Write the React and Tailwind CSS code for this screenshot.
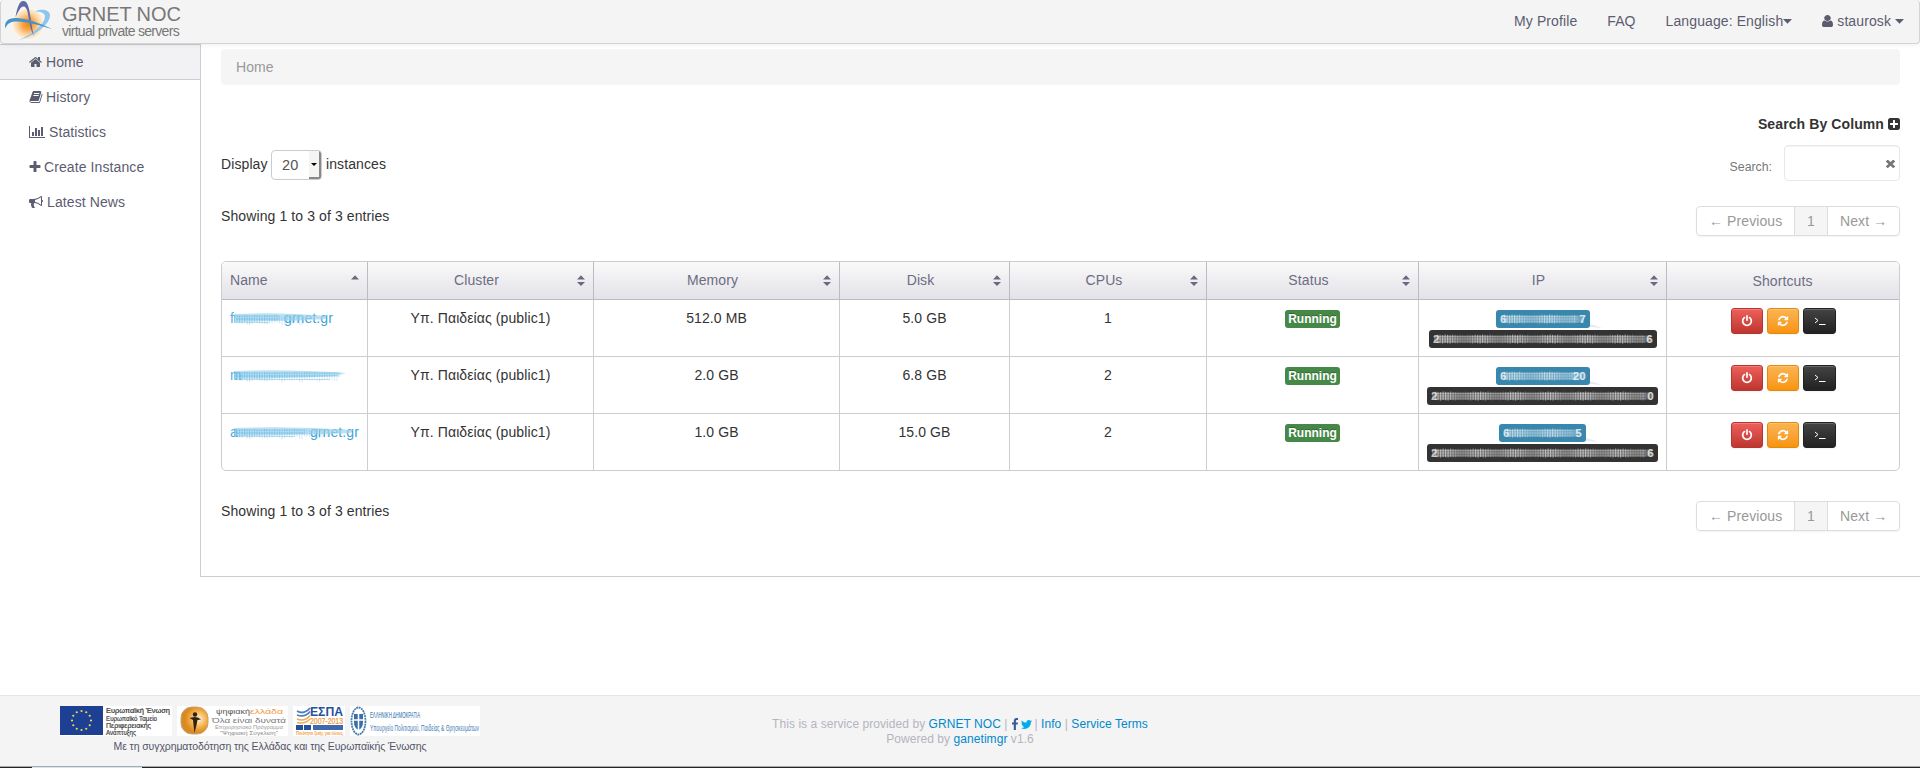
const P = {
  home: "M1408 992v480q0 26-19 45t-45 19h-384v-384h-256v384h-384q-26 0-45-19t-19-45v-480q0-1 .5-3t.5-3l575-474 575 474q1 2 1 6zm223-69l-62 74q-8 9-21 11h-3q-13 0-21-7l-692-577-692 577q-12 8-24 7-13-2-21-11l-62-74q-8-10-7-23.5t11-21.5l719-599q32-26 76-26t76 26l244 204v-195q0-14 9-23t23-9h192q14 0 23 9t9 23v408l219 182q10 8 11 21.5t-7 23.5z",
  book: "M1703 478q40 57 18 129l-275 906q-19 64-76.5 107.5t-122.5 43.5h-923q-77 0-148.5-53.5t-99.5-131.5q-24-67-2-127 0-4 3-27t4-37q1-8-3-21.5t-3-19.5q2-11 8-21t16.5-23.5 16.5-23.5q23-38 45-91.5t30-91.5q3-10 .5-30t-.5-28q3-11 17-28t17-23q21-36 42-92t25-90q1-9-2.5-32t.5-28q4-13 22-30.5t22-22.5q19-26 42.5-84.5t27.5-96.5q1-8-3-25.5t-2-26.5q2-8 9-18t18-23 17-21q8-12 16.5-30.5t15-35 16-36 19.5-32 26.5-23.5 36-11.5 47.5 5.5l-1 3q38-9 51-9h761q74 0 114 56t18 130l-274 906q-36 119-71.5 153.5t-128.5 34.5h-869q-27 0-38 15-11 16-1 43 24 70 144 70h923q29 0 56-15.5t35-41.5l300-987q7-22 5-57 38 15 59 43zm-1064 2q-4 13 2 22.5t20 9.5h608q13 0 25.5-9.5t16.5-22.5l21-64q4-13-2-22.5t-20-9.5h-608q-13 0-25.5 9.5t-16.5 22.5zm-83 256q-4 13 2 22.5t20 9.5h608q13 0 25.5-9.5t16.5-22.5l21-64q4-13-2-22.5t-20-9.5h-608q-13 0-25.5 9.5t-16.5 22.5z",
  chart: "M640 896v512h-256v-512h256zm384-512v1024h-256v-1024h256zm1024 1152v128h-2048v-1536h128v1408h1920zm-640-896v768h-256v-768h256zm384-384v1152h-256v-1152h256z",
  bullhorn: "M1664 640q53 0 90.5 37.5t37.5 90.5-37.5 90.5-90.5 37.5v384q0 52-38 90t-90 38q-417-347-812-380-58 19-91 66t-31 100.5 40 92.5q-20 33-23 65.5t6 58 33.5 55 48 50 61.5 50.5q-29 58-111.5 83t-168.5 11.5-132-55.5q-7-23-29.5-87.5t-32-94.5-23-89-15-101 3.500-98.5 22-110.5h-122q-66 0-113-47t-47-113v-192q0-66 47-113t113-47h480q435 0 896-384 52 0 90 38t38 90v384zm-128 604v-954q-394 302-768 343v270q377 42 768 341z",
  plus: "M1600 736v192q0 40-28 68t-68 28h-416v416q0 40-28 68t-68 28h-192q-40 0-68-28t-28-68v-416h-416q-40 0-68-28t-28-68v-192q0-40 28-68t68-28h416v-416q0-40 28-68t68-28h192q40 0 68 28t28 68v416h416q40 0 68 28t28 68z",
  plusSquare: "M1408 960v-128q0-26-19-45t-45-19h-320v-320q0-26-19-45t-45-19h-128q-26 0-45 19t-19 45v320h-320q-26 0-45 19t-19 45v128q0 26 19 45t45 19h320v320q0 26 19 45t45 19h128q26 0 45-19t19-45v-320h320q26 0 45-19t19-45zm256-544v960q0 119-84.5 203.5t-203.5 84.5h-960q-119 0-203.5-84.5t-84.5-203.5v-960q0-119 84.5-203.5t203.5-84.5h960q119 0 203.5 84.5t84.5 203.5z",
  user: "M1536 1399q0 109-62.5 187t-150.5 78h-854q-88 0-150.5-78t-62.5-187q0-85 8.5-160.5t31.5-152 58.5-131 94-89 134.5-34.5q131 128 313 128t313-128q76 0 134.5 34.5t94 89 58.5 131 31.5 152 8.5 160.5zm-256-887q0 159-112.5 271.5t-271.5 112.5-271.5-112.5-112.5-271.5 112.5-271.5 271.5-112.5 271.5 112.5 112.5 271.5z",
  power: "M1664 896q0 156-61 298t-164 245-245 164-298 61-298-61-245-164-164-245-61-298q0-182 80.5-343t226.5-270q43-32 95.5-25t83.5 50q32 42 24.5 94.5t-49.5 84.5q-98 74-151.5 181t-53.5 228q0 104 40.5 198.5t109.5 163.5 163.5 109.5 198.5 40.5 198.5-40.5 163.5-109.5 109.5-163.5 40.5-198.5q0-121-53.5-228t-151.5-181q-42-32-49.5-84.5t24.5-94.5q31-43 84-50t95 25q146 109 226.5 270t80.5 343zm-640-768v640q0 52-38 90t-90 38-90-38-38-90v-640q0-52 38-90t90-38 90 38 38 90z",
  refresh: "M1639 1056q0 5-1 7-64 268-268 434.5t-478 166.5q-146 0-282.5-55t-243.5-157l-129 129q-19 19-45 19t-45-19-19-45v-448q0-26 19-45t45-19h448q26 0 45 19t19 45-19 45l-137 137q71 66 161 102t187 36q134 0 250-65t186-179q11-17 53-117 8-23 30-23h192q13 0 22.5 9.5t9.5 22.5zm25-800v448q0 26-19 45t-45 19h-448q-26 0-45-19t-19-45 19-45l138-138q-148-137-349-137-134 0-250 65t-186 179q-11 17-53 117-8 23-30 23h-199q-13 0-22.5-9.5t-9.5-22.5v-7q65-268 270-434.5t480-166.5q146 0 284 55.5t245 156.5l130-129q19-19 45-19t45 19 19 45z",
  facebook: "M1343 12v264h-157q-86 0-116 36t-30 108v189h293l-39 296h-254v759h-306v-759h-255v-296h255v-218q0-186 104-288.5t277-102.5q147 0 228 12z",
  twitter: "M1684 408q-67 98-162 167 1 14 1 42 0 130-38 259.5t-115.5 248.5-184.5 210.5-258 146-323 54.5q-271 0-496-145 35 4 78 4 225 0 401-138-105-2-188-64.5t-114-159.5q33 5 61 5 43 0 85-11-112-23-185.5-111.5t-73.5-205.5v-4q68 38 146 41-66-44-105-115t-39-154q0-88 44-163 121 149 294.5 238.5t371.5 99.5q-8-38-8-74 0-134 94.5-228.5t228.5-94.5q140 0 236 102 109-21 205-78-37 115-142 178 93-10 186-50z",
  times: "M1490 1322q0 40-28 68l-136 136q-28 28-68 28t-68-28l-294-294-294 294q-28 28-68 28t-68-28l-136-136q-28-28-28-68t28-68l294-294-294-294q-28-28-28-68t28-68l136-136q28-28 68-28t68 28l294 294 294-294q28-28 68-28t68 28l136 136q28 28 28 68t-28 68l-294 294 294 294q28 28 28 68z",
};

function Icon({ name, box = "0 0 1792 1792", className }) {
  return (
    <svg viewBox={box} preserveAspectRatio="none" fill="currentColor" className={"shrink-0 " + className}>
      <path d={P[name]} />
    </svg>
  );
}

function Caret({ className }) {
  return (
    <svg viewBox="0 0 9 5" className={"h-[5px] w-[9px] shrink-0 " + className} fill="currentColor">
      <path d="M0 0h9L4.500 4.800z" />
    </svg>
  );
}

function Logo() {
  return (
    <svg viewBox="0 0 54 44" className="-ml-px h-11 w-[54px] shrink-0">
      <defs>
        <radialGradient id="sun">
          <stop offset="0" stopColor="#f58a07" />
          <stop offset="0.3" stopColor="#f8a040" />
          <stop offset="0.65" stopColor="#fcd3a0" />
          <stop offset="1" stopColor="#fdf8f2" />
        </radialGradient>
      </defs>
      <circle cx="28" cy="24" r="16.5" fill="url(#sun)" />
      <path d="M34.500 11.500C42 8 49 10 50 14.500 50.500 24 37 34.500 18.500 40.500 33 33.500 44.500 25 45 16.500 45 12.500 40 11.500 34.500 11.500z" fill="#8cc6ee" />
      <path d="M15.500 17C17.500 6 20 .5 23.500 1c4 0 5.500 6 7 16 1 8 2 14 3.500 19-3.500-6-4.500-12-5.500-19C27.500 9 25.500 6.500 23.500 6.500c-3 0-5 5-8 10.500z" fill="#5f68a8" />
      <path d="M5.300 28.500C4 22 8 18 15.500 18 27 18 39 23 52 29 40 25.500 27 21.500 17 21.500c-6 0-9.500 1.500-11.700 7z" fill="#4394cc" />
    </svg>
  );
}

const NAV = [
  { label: "Home", icon: "home", active: true },
  { label: "History", icon: "book" },
  { label: "Statistics", icon: "chart", box: "0 0 2048 1792" },
  { label: "Create Instance", icon: "plus" },
  { label: "Latest News", icon: "bullhorn" },
];

const NAV_ICON = {
  home: "h-[14px] w-[14px] -ml-[0.5px] -mr-[0.5px]",
  book: "h-[14px] w-[14px] -ml-[0.5px] -mr-[0.5px]",
  chart: "h-[14px] w-[16px]",
  plus: "h-[14px] w-[14px] -ml-[1px] -mr-[2px]",
  bullhorn: "h-[14px] w-[14px]",
};

const COLS = ["Name", "Cluster", "Memory", "Disk", "CPUs", "Status", "IP", "Shortcuts"];

const ROWS = [
  { id: 1, name: ["f", "grnet.gr"], nameW: 103, mem: "512.0 MB", disk: "5.0 GB", cpus: "1", ip4: ["6", "7"], ip4W: 94, ip6: ["2", "6"], ip6W: 228 },
  { id: 2, name: ["m", ""], nameW: 114, mem: "2.0 GB", disk: "6.8 GB", cpus: "2", ip4: ["6", "20"], ip4W: 94, ip6: ["2", "0"], ip6W: 231 },
  { id: 3, name: ["a", "grnet.gr"], nameW: 129, mem: "1.0 GB", disk: "15.0 GB", cpus: "2", ip4: ["6", "5"], ip4W: 87, ip6: ["2", "6"], ip6W: 231 },
];

function Sorter({ asc }) {
  return (
    <svg viewBox="0 0 8 11" className="absolute right-2 top-[13px] h-[11px] w-2" fill="#69697f">
      <path d="M0 4.500h8L4 .2z" />
      {!asc && <path d="M0 7h8L4 11z" />}
    </svg>
  );
}

function Pager() {
  return (
    <div className="flex h-[30px] overflow-hidden rounded-[4px] border border-[#ddd] leading-7 text-[#999] shadow-[0_1px_2px_rgba(0,0,0,0.05)]">
      <span className="w-[97px] whitespace-pre pl-3">← Previous</span>
      <span className="w-[34px] border-x border-[#ddd] bg-[#f5f5f5] text-center">1</span>
      <span className="w-[71px] whitespace-pre pl-3">Next →</span>
    </div>
  );
}

// Masked address label: only the outer characters stay readable.
function MaskedLabel({ ends, width, color, glow }) {
  const count = Math.floor((width - 20) / 2.5);
  return (
    <svg width={width} height="18" viewBox={"0 0 " + width + " 18"} className="shrink-0 overflow-visible">
      {glow && <path d={"M" + (width - 22) + " 15q18 -4 34 3z"} fill={color} opacity="0.15" />}
      <rect width={width} height="18" rx="3" fill={color} />
      <rect x="5" y="5.500" width={width - 11} height="7" fill="#fff" opacity="0.28" />
      {Array.from({ length: count }, (_, i) => (
        <rect key={i} x={8 + i * 2.5} y={4.5 + (i % 3) * 0.3} width="1.2" height="8.500" fill="#fff" opacity={0.3 + 0.2 * Math.sin(i * 0.45)} />
      ))}
      <path d={"M7 6.500H" + (width - 12) + "M7 9H" + (width - 12) + "M7 12H" + (width - 12)} stroke="#fff" strokeWidth="0.8" opacity="0.3" />
      <text x="4" y="13" fontSize="11.800" fontWeight="700" fill="#fff" opacity="0.65">{ends[0]}</text>
      <text x={width - 4} y="13" textAnchor="end" fontSize="11.800" fontWeight="700" fill="#fff" opacity="0.75">{ends[1]}</text>
    </svg>
  );
}

// Masked host name: a smudge with the first letter and, where legible, the domain.
function MaskedName({ ends, width }) {
  const tail = ends[1] ? 50 : 0;
  const span = width - tail - 8;
  const count = Math.floor((span + tail * 0.5) / 2.5);
  return (
    <svg width={width + 4} height="20" viewBox={"0 0 " + (width + 4) + " 20"} className="block overflow-visible" fill="#1a94d2">
      <text x="0" y="15" fontSize="14" opacity="0.75">{ends[0]}</text>
      {tail > 0 && <text x={width} y="15" textAnchor="end" fontSize="14" opacity="0.85">{ends[1]}</text>}
      <path d={"M4 6Q" + width * 0.5 + " 4 " + (width + (tail ? -6 : 2)) + " 8L" + (width - 8) + " 11Q" + width * 0.6 + " 13 4 14z"} fill="#9fd3ee" opacity="0.7" />
      {Array.from({ length: count }, (_, i) => (
        <rect key={i} x={4 + i * 2.5} y={7 + (i % 4) * 0.4} width="1.100" height={i % 7 > 4 ? 9 : 7.5} opacity={0.3 - (0.15 * i) / count} />
      ))}
      <path d={"M4 8H" + (span + 4) + "M6 11H" + (span + 4) + "M4 14.500H" + (span - 6)} stroke="#1a94d2" strokeWidth="0.8" opacity="0.35" />
    </svg>
  );
}

function Shortcuts() {
  const base = "flex h-[26px] items-center justify-center rounded-[3px] border text-white shadow-[inset_0_1px_0_rgba(255,255,255,0.2),0_1px_2px_rgba(0,0,0,0.05)] ";
  return (
    <div className="flex justify-center gap-1">
      <span className={base + "w-8 border-[#b8342f] bg-linear-to-b from-[#ee5f5b] to-[#bd362f]"}><Icon name="power" className="h-3 w-3" /></span>
      <span className={base + "w-8 border-[#e08a10] bg-linear-to-b from-[#fbb450] to-[#f89406]"}><Icon name="refresh" className="h-3 w-3" /></span>
      <span className={base + "w-[33px] border-[#222] bg-linear-to-b from-[#444] to-[#222]"}>
        <svg viewBox="0 0 12 10" className="h-[10px] w-3" fill="none" stroke="#fff" strokeWidth="1"><path d="M1 2l3 2.500-3 2.500M5 8.500h6.500" /></svg>
      </span>
    </div>
  );
}

function Stars() {
  return Array.from({ length: 12 }, (_, i) => {
    const a = (i * Math.PI) / 6;
    return <circle key={i} cx={21.5 + 9.5 * Math.sin(a)} cy={14.5 - 9.5 * Math.cos(a)} r="1.100" fill="#e8e04a" />;
  });
}

function Sponsors() {
  return (
    <div className="flex h-[30px] gap-[5px] tracking-normal">
      <svg viewBox="0 0 112 30" className="h-[30px] w-28 overflow-visible bg-white" fontSize="6.500" fill="#333">
        <rect width="43" height="29" fill="#1d3f94" />
        <Stars />
        <text x="46" y="6.800" fontSize="7.500" textLength="64" stroke="#333" strokeWidth="0.2" lengthAdjust="spacingAndGlyphs">Ευρωπαϊκή Ένωση</text>
        <text x="46" y="15" textLength="51" stroke="#333" strokeWidth="0.15" lengthAdjust="spacingAndGlyphs">Ευρωπαϊκό Ταμείο</text>
        <text x="46" y="22" textLength="45" stroke="#333" strokeWidth="0.15" lengthAdjust="spacingAndGlyphs">Περιφερειακής</text>
        <text x="46" y="28.500" textLength="30" stroke="#333" strokeWidth="0.15" lengthAdjust="spacingAndGlyphs">Ανάπτυξης</text>
      </svg>
      <svg viewBox="0 0 111 30" className="h-[30px] w-[111px] overflow-visible bg-white">
        <defs>
          <radialGradient id="orb" cx="0.65" cy="0.45">
            <stop offset="0" stopColor="#fff3d8" />
            <stop offset="0.6" stopColor="#f4b04a" />
            <stop offset="1" stopColor="#d98a20" />
          </radialGradient>
        </defs>
        <rect x="4" y="1" width="27" height="27" rx="11" fill="url(#orb)" stroke="#c9a27a" />
        <circle cx="18" cy="8.500" r="2.200" fill="#332211" />
        <path d="M12.500 12l5-1 3.500.500 3 2-3.500.500-1 5-2 8-1-8-.500-5z" fill="#332211" />
        <text x="39" y="8" fontSize="8" fill="#555" textLength="34" lengthAdjust="spacingAndGlyphs">ψηφιακή</text>
        <text x="73" y="8" fontSize="8" fill="#f0953a" textLength="33" lengthAdjust="spacingAndGlyphs">ελλάδα</text>
        <text x="35" y="16.500" fontSize="7.500" fill="#777" textLength="74" lengthAdjust="spacingAndGlyphs">Όλα είναι δυνατά</text>
        <text x="38" y="23" fontSize="5.500" fill="#999" textLength="68" lengthAdjust="spacingAndGlyphs">Επιχειρησιακό Πρόγραμμα</text>
        <text x="43" y="28.500" fontSize="5.500" fill="#888" textLength="58" lengthAdjust="spacingAndGlyphs">"Ψηφιακή Σύγκλιση"</text>
      </svg>
      <svg viewBox="0 0 52 30" className="h-[30px] w-[52px] overflow-visible bg-white">
        <path d="M4 5q7 4 13-3M4 9q8 3 13-3.500" stroke="#4a7fc4" strokeWidth="1.800" fill="none" />
        <path d="M4 13q8 3 13-3.500M4 16.500q8 2 13-3.500" stroke="#f2a950" strokeWidth="1.500" fill="none" />
        <text x="17" y="10" fontSize="13.500" fontWeight="700" fill="#24509c" textLength="33" lengthAdjust="spacingAndGlyphs">ΕΣΠΑ</text>
        <text x="17" y="18" fontSize="9" fill="#f0953a" stroke="#f0953a" strokeWidth="0.2" textLength="33" lengthAdjust="spacingAndGlyphs">2007-2013</text>
        <rect x="3" y="19" width="7" height="5" fill="#24509c" />
        <rect x="11" y="19" width="7" height="5" fill="#24509c" />
        <rect x="20" y="19" width="30" height="5" fill="#4069ab" />
        <text x="3" y="28.800" fontSize="4.500" fontWeight="700" fill="#f0a040" textLength="47" lengthAdjust="spacingAndGlyphs">Ποιότητα ζωής για όλους</text>
      </svg>
      <svg viewBox="0 0 130 30" className="h-[30px] w-[130px] overflow-visible bg-white" fill="#3f7db5">
        <ellipse cx="8.500" cy="15" rx="7" ry="13.500" fill="none" stroke="#4a7fb0" strokeWidth="1.800" strokeDasharray="2 0.600" />
        <path d="M4 8h9v8q0 6-4.500 8-4.500-2-4.500-8z" fill="#3b6fa6" />
        <path d="M8.500 8v16M4 14h9" stroke="#fff" strokeWidth="1.500" />
        <text x="20" y="11.500" fontSize="8.500" textLength="50" stroke="#3f7db5" strokeWidth="0.1" lengthAdjust="spacingAndGlyphs">ΕΛΛΗΝΙΚΗ ΔΗΜΟΚΡΑΤΙΑ</text>
        <text x="20" y="24.800" fontSize="8.500" textLength="109" lengthAdjust="spacingAndGlyphs">Υπουργείο Πολιτισμού, Παιδείας &amp; Θρησκευμάτων</text>
      </svg>
    </div>
  );
}

export default function App() {
  return (
    <div className="flex h-[768px] w-[1920px] flex-col overflow-hidden bg-white font-['Liberation_Sans',Arial,sans-serif] text-[14px] leading-5 tracking-[0.1px] text-[#333]">
      <header className="relative flex h-11 shrink-0 justify-between rounded-[4px] border border-t-0 border-[#d4d4d4] bg-[#f4f4f4] shadow-[0_1px_4px_rgba(0,0,0,0.067)]">
        <div className="flex text-[#777]">
          <Logo />
          <div className="ml-2 pt-[3px]">
            <div className="text-[20px] leading-[22px] tracking-[-0.1px]">GRNET NOC</div>
            <div className="text-[14px] leading-3 tracking-[-0.7px]">virtual private servers</div>
          </div>
        </div>
        <nav className="flex pr-[15px] pt-[11px] text-[#5c5c70]">
          <span>My Profile</span>
          <span className="ml-[30px]">FAQ</span>
          <span className="ml-[30px] flex">Language: English<Caret className="mt-2" /></span>
          <span className="ml-[30px] flex">
            <Icon name="user" box="256 128 1280 1536" className="mt-1 h-3 w-[11px]" />
            <span className="ml-1">staurosk</span>
            <Caret className="ml-1 mt-2" />
          </span>
        </nav>
      </header>

      <div className="flex h-[533px] shrink-0">
        <aside className="w-[200px] shrink-0">
          {NAV.map((n) => (
            <div
              key={n.label}
              className={
                "flex items-center gap-1 pl-[29px] text-[#5c5c70] " +
                (n.active ? "-mb-px h-[36px] border-y border-[#ccccd2] bg-[#f2f2f5]" : "h-[35px]")
              }
            >
              <Icon name={n.icon} box={n.box} className={NAV_ICON[n.icon]} />
              {n.label}
            </div>
          ))}
        </aside>

        <main className="w-[1720px] border-b border-l border-[#ccccd2] pl-5 pr-[20px] pt-[5px]">
          <div className="h-9 rounded-[4px] bg-[#f5f5f5] px-[15px] pt-2 text-[#999]">Home</div>

          <div className="mt-[29px] flex items-center justify-end gap-1 font-bold">
            Search By Column
            <Icon name="plusSquare" box="128 128 1536 1536" className="h-3 w-3" />
          </div>

          <div className="mt-[11px] flex h-9 justify-between">
            <div className="flex pt-[5px]">
              <span className="w-[46px] pt-1">Display</span>
              <div className="ml-1 flex h-[30px] w-[51px] items-stretch overflow-hidden rounded-[4px] border border-[#ccc]">
                <span className="flex-1 pl-[10px] pt-1 text-[14.500px] text-[#555]">20</span>
                <span className="flex w-3 items-center justify-center border-b-2 border-r-2 border-[#888] bg-[#f4f4f2]">
                  <svg viewBox="0 0 6 3" className="h-[3px] w-[6px]"><path d="M0 0h6L3 3z" /></svg>
                </span>
              </div>
              <span className="ml-1 pt-1">instances</span>
            </div>
            <div className="flex">
              <span className="mr-3 pt-3 text-[12.300px] tracking-normal text-[#777]">Search:</span>
              <div className="flex h-9 w-[116px] items-center justify-end rounded-[4px] border border-[#e8e8e8] pr-1 shadow-[inset_0_1px_1px_rgba(0,0,0,0.05)]">
                <Icon name="times" box="302 238 1188 1316" className="h-[9px] w-[9px] text-[#777]" />
              </div>
            </div>
          </div>

          <div className="mt-[25px] flex h-[30px] justify-between">
            <span>Showing 1 to 3 of 3 entries</span>
            <Pager />
          </div>

          <div className="mt-[25px] overflow-hidden rounded-[5px] border border-[#ccccd2]">
            <div className="grid h-[38px] grid-cols-[146px_226px_246px_170px_197px_212px_248px_233px] border-b border-[#bbbbc4] bg-linear-to-b from-[#fafafa] to-[#e2e2e8]">
              {COLS.map((c, i) => (
                <div
                  key={c}
                  className={
                    "relative text-[#6c6c82] " +
                    (i === 0 ? "pl-2 " : i < 7 ? "pr-2 text-center " : "pr-[2px] text-center ") +
                    (i < 7 ? "border-r border-[#bbbbc4] pt-2" : "pt-[9px]")
                  }
                >
                  {c}
                  {i < 7 && <Sorter asc={i === 0} />}
                </div>
              ))}
            </div>
            {ROWS.map((r, i) => (
              <div
                key={r.id}
                className={
                  "grid grid-cols-[146px_226px_246px_170px_197px_212px_248px_233px] text-center [&>div]:pt-2 [&>div:not(:last-child)]:border-r [&>div]:border-[#ccccd2] " +
                  (i < 2 ? "h-[57px] border-b border-[#ccccd2]" : "h-14")
                }
              >
                <div className="pl-2"><MaskedName ends={r.name} width={r.nameW} /></div>
                <div>Υπ. Παιδείας (public1)</div>
                <div>{r.mem}</div>
                <div>{r.disk}</div>
                <div>{r.cpus}</div>
                <div>
                  <span className="mx-auto mt-[2px] block h-[18px] w-[55px] rounded-[3px] bg-[#468847] text-[12px] font-bold leading-[18px] tracking-normal text-white [text-shadow:0_-1px_0_rgba(0,0,0,0.25)]">Running</span>
                </div>
                <div className="flex flex-col items-center gap-[2px] !pt-[10px]">
                  <MaskedLabel ends={r.ip4} width={r.ip4W} color="#3a87ad" glow />
                  <MaskedLabel ends={r.ip6} width={r.ip6W} color="#333333" />
                </div>
                <div><Shortcuts /></div>
              </div>
            ))}
          </div>

          <div className="mt-[30px] flex h-[30px] justify-between">
            <span>Showing 1 to 3 of 3 entries</span>
            <Pager />
          </div>
        </main>
      </div>

      <footer className="mt-auto h-[73px] shrink-0 border-t border-[#e5e5e5] bg-[#f4f4f4]">
        <div className="flex h-[71px] border-b border-[#aaa]">
          <div className="w-[640px] pl-[60px] pt-[10px]">
            <Sponsors />
            <div className="w-[420px] text-center text-[10.500px] leading-5 tracking-[-0.1px] text-[#555568]">Με τη συγχρηματοδότηση της Ελλάδας και της Ευρωπαϊκής Ένωσης</div>
          </div>
          <div className="w-[640px] pt-[21px] text-center text-[12px] leading-[15px] tracking-[0.06px] text-[#b5b5be] [&_b]:font-normal [&_b]:text-[#0088cc]">
            <div className="flex justify-center">
              <span>This is a service provided by <b>GRNET NOC</b> |</span>
              <Icon name="facebook" box="479 0 864 1664" className="ml-1 mt-px h-3 w-[6px] text-[#3b5998]" />
              <Icon name="twitter" box="108 256 1576 1280" className="mx-[3px] mt-[3px] h-[9px] w-[11px] text-[#00aced]" />
              <span>| <b>Info</b> | <b>Service Terms</b></span>
            </div>
            <div>Powered by <b>ganetimgr</b> v1.6</div>
          </div>
        </div>
        <div className="flex h-px bg-[#22262a] pl-8"><span className="w-[110px] bg-[#d5e6f0]" /></div>
      </footer>
    </div>
  );
}
